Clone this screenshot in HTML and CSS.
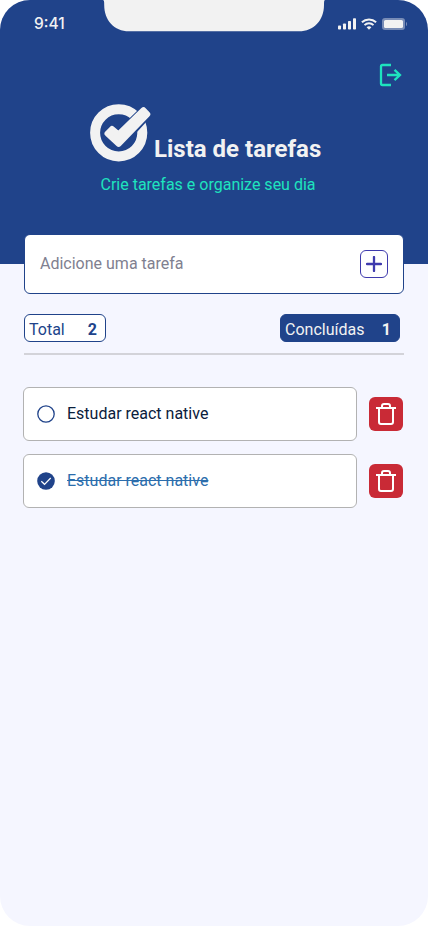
FILE: index.html
```html
<!DOCTYPE html>
<html lang="pt-BR">
<head>
<meta charset="utf-8">
<title>Lista de tarefas</title>
<link rel="stylesheet" href="styles.css">
</head>
<body>
<div class="screen">
  <header class="header">
    <svg class="notch" width="222" height="32" viewBox="0 0 222 32"><path d="M0 0C1.200 .5 1.200 2 1.200 5C1.200 20 11 31.300 26 31.300H196C211 31.300 221 20 221 5C221 2 221 .5 222 0Z"/></svg>
    <div class="status">
      <span class="time">9:41</span>
      <div class="status-icons">
        <svg width="18" height="12" viewBox="0 0 18 12" fill="#f2f2f2"><rect x="0" y="7.500" width="3" height="4" rx=".8"/><rect x="5" y="5.500" width="3" height="6" rx=".8"/><rect x="10" y="3" width="3" height="8.500" rx=".8"/><rect x="15" y=".3" width="3" height="11.200" rx=".8"/></svg>
        <svg width="16" height="12" viewBox="0 0 16 12" fill="none" stroke="#f2f2f2" stroke-width="2"><path d="M.9 4.300C4.900 .5 11.100 .5 15.100 4.300M3.500 7.100C6 4.700 10 4.700 12.500 7.100"/><path d="M5.600 9.300C7 8 9 8 10.400 9.300L8 11.700Z" fill="#f2f2f2" stroke="none"/></svg>
        <svg width="25" height="12" viewBox="0 0 25 12"><rect width="23" height="12" rx="3" fill="#f2f2f2" opacity=".42"/><rect x="2" y="2" width="19" height="8" rx="1.600" fill="#f2f2f2"/><path d="M24 4v4c1.200-.7 1.200-3.300 0-4Z" fill="#f2f2f2" opacity=".5"/></svg>
      </div>
    </div>
    <div class="logout">
      <svg width="24" height="24" viewBox="0 0 24 24" fill="none" stroke="#1ee3be" stroke-width="2.300"><path d="M13 2H4.500Q3 2 3 3.500V20.500Q3 22 4.500 22H13"/><path d="M9 12H22.300M16.500 6.800L22 12L16.500 17.200"/></svg>
    </div>
    <div class="brand">
      <svg class="logo" width="62" height="60" viewBox="0 0 62 60"><circle cx="28.700" cy="29.800" r="23.600" fill="none" stroke="#f2f2f2" stroke-width="10"/><path d="M17.300 31.200L28.600 42.500L57 11.500L53.500 8L28.400 32.300L22 26.400Z" fill="#20438a" stroke="#20438a" stroke-width="9" stroke-linejoin="round"/><path d="M17.500 30.500L28.600 40.800L57.300 11.200L53.500 7.200L28.500 31.500L22 26Z" fill="#f2f2f2" stroke="#f2f2f2" stroke-width="6" stroke-linejoin="round"/></svg>
      <h1 class="title">Lista de tarefas</h1>
    </div>
    <p class="subtitle">Crie tarefas e organize seu dia</p>
  </header>
  <main class="content">
    <div class="add">
      <span>Adicione uma tarefa</span>
      <div class="plus"><svg width="16" height="16" viewBox="0 0 16 16" stroke="#3e3aad" stroke-width="2.300" stroke-linecap="round"><path d="M8 1V15M1 8H15"/></svg></div>
    </div>
    <div class="summary">
      <div class="badge"><span>Total</span><b>2</b></div>
      <div class="badge badge-done"><span>Concluídas</span><b>1</b></div>
    </div>
    <div class="tasks">
      <div class="row">
        <div class="task">
          <svg width="18" height="18" viewBox="0 0 18 18"><circle cx="9" cy="9" r="8.200" fill="none" stroke="#20438a" stroke-width="1.300"/></svg>
          <span>Estudar react native</span>
        </div>
        <div class="delete"><svg width="20" height="22" viewBox="0 0 20 22" fill="none" stroke="#fff" stroke-width="2"><path d="M0 5H20M3 5V19Q3 21 5 21H15Q17 21 17 19V5M6 5V3Q6 1 8 1H12Q14 1 14 3V5"/></svg></div>
      </div>
      <div class="row">
        <div class="task done">
          <svg width="18" height="18" viewBox="0 0 18 18"><circle cx="9" cy="9" r="8.800" fill="#20438a"/><path d="M4.300 9.300L7.500 12.300L13.700 6" fill="none" stroke="#fff" stroke-width="1.200"/></svg>
          <span>Estudar react native</span>
        </div>
        <div class="delete"><svg width="20" height="22" viewBox="0 0 20 22" fill="none" stroke="#fff" stroke-width="2"><path d="M0 5H20M3 5V19Q3 21 5 21H15Q17 21 17 19V5M6 5V3Q6 1 8 1H12Q14 1 14 3V5"/></svg></div>
      </div>
    </div>
  </main>
</div>
</body>
</html>
```
FILE: styles.css
```css
* { box-sizing: border-box; }
body { margin: 0; background: #fff; font-family: Roboto, sans-serif; font-size: 16px; line-height: 20px; }
svg { display: block; flex: none; }
.screen { width: 428px; height: 926px; border-radius: 30px; overflow: hidden; background: #f5f6ff; }
.header { position: relative; height: 264px; background: #20438a; }
.notch { position: absolute; top: 0; left: 103px; fill: #f2f2f2; }
.status { height: 47px; padding: 0 21px 0 34px; display: flex; justify-content: space-between; align-items: center; }
.time { font-family: Inter, sans-serif; font-weight: 500; font-size: 15.500px; color: #f2f2f2; }
.status-icons { display: flex; gap: 5px; }
.logout { display: flex; justify-content: flex-end; padding: 16px 26px 0 0; }
.brand { display: flex; align-items: flex-end; gap: 2px; padding-left: 90px; margin-top: 16px; }
.title { margin: 0; font-size: 24px; line-height: 28px; font-weight: 700; color: #f2f2f2; }
.subtitle { margin: 12px 0 0; padding-right: 12px; text-align: center; color: #1ee3be; }
.content { padding: 0 24px; }
.add { position: relative; height: 60px; margin-top: -30px; padding: 0 15px; border: 1px solid #20438a; border-radius: 6px; background: #fff; display: flex; align-items: center; justify-content: space-between; color: #808090; }
.plus { width: 28px; height: 28px; border: 1px solid #3e3aad; border-radius: 6px; display: grid; place-items: center; }
.summary { display: flex; justify-content: space-between; padding: 20px 4px 11px 0; border-bottom: 2px solid #d3d3d9; }
.badge { width: 82px; height: 28px; padding: 4px 8px 0 4px; border: 1px solid #20438a; border-radius: 6px; background: #fff; color: #20438a; display: flex; align-items: center; justify-content: space-between; }
.badge-done { width: 120px; background: #20438a; color: #f2f2f2; }
.tasks { margin: 32px 0 0 -1px; display: grid; gap: 13px; }
.row { display: flex; align-items: center; gap: 12px; }
.task { width: 334px; height: 54px; padding-left: 13px; border: 1px solid #b2b2b2; border-radius: 6px; background: #fff; display: flex; align-items: center; gap: 12px; color: #0a203c; }
.done { color: #2b6dac; }
.done span { text-decoration: line-through; }
.delete { width: 34px; height: 34px; border-radius: 6px; background: #c92a36; display: grid; place-items: center; }
```
